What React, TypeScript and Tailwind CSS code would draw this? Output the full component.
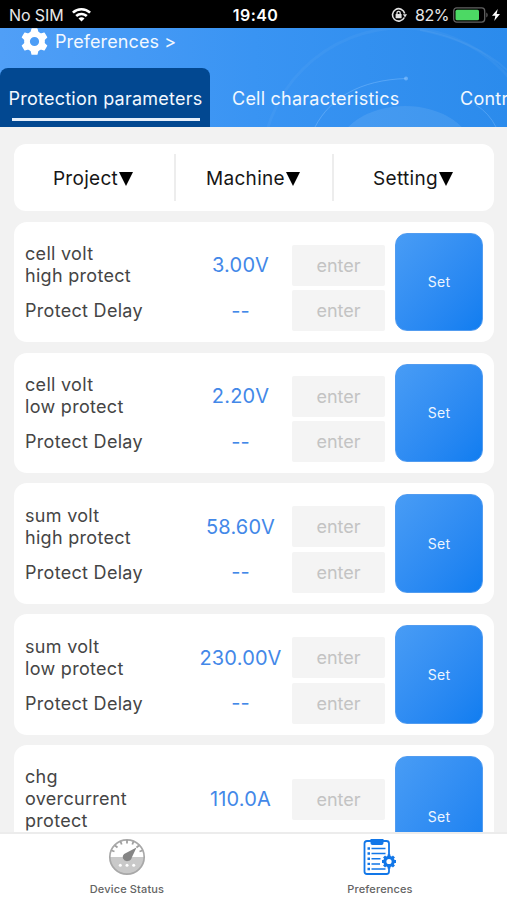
import type React from 'react'

type Param = {
  lines: string[]
  value: string
}

const params: Param[] = [
  { lines: ['cell volt', 'high protect'], value: '3.00V' },
  { lines: ['cell volt', 'low protect'], value: '2.20V' },
  { lines: ['sum volt', 'high protect'], value: '58.60V' },
  { lines: ['sum volt', 'low protect'], value: '230.00V' },
  { lines: ['chg', 'overcurrent', 'protect'], value: '110.0A' },
]

const GearIcon: React.FC<{ className?: string }> = ({ className }) => (
  <svg viewBox="0 0 27 27" className={className} fill="currentColor">
    {[0, 60, 120].map((angle) => (
      <g key={angle} transform={`rotate(${angle} 13.5 13.5)`}>
        <path d="M10.400 0.800Q10.500 0.300 11 0.300H16Q16.500 0.300 16.600 0.800L17.600 5H9.400Z" />
        <path d="M10.400 26.200Q10.500 26.700 11 26.700H16Q16.500 26.700 16.600 26.200L17.600 22H9.400Z" />
      </g>
    ))}
    <circle cx="13.500" cy="13.500" r="7.500" fill="none" stroke="currentColor" strokeWidth="5.800" />
  </svg>
)

const StatusBar: React.FC = () => (
  <div className="relative flex h-7 shrink-0 items-center bg-black pt-0.5 text-[16px] text-white">
    <span className="ml-[9px] w-[63px] whitespace-nowrap tracking-[-0.1px] text-[#e8e8e8]">No SIM</span>
    <svg viewBox="0 0 19 14" className="h-[14px] w-[19px]" fill="#fff">
      <path d="M9.5 0C13.100 0 16.500 1.400 19 3.700L17.200 5.600A11.300 11.300 0 0 0 1.800 5.600L0 3.700A14 14 0 0 1 9.500 0Z" />
      <path d="M9.500 4.700C11.800 4.700 14 5.600 15.700 7.100L13.900 9A6.500 6.500 0 0 0 5.100 9L3.300 7.100A9.200 9.200 0 0 1 9.500 4.700Z" />
      <path d="M9.500 9.200C10.700 9.200 11.700 9.600 12.500 10.400L9.500 13.500L6.500 10.400A4.400 4.400 0 0 1 9.500 9.200Z" />
    </svg>
    <span className="absolute inset-x-0 pl-[4px] text-center font-semibold tracking-[0.4px]">19:40</span>
    <div className="ml-auto flex items-center pr-[7px]">
      <svg viewBox="0 0 16 16" className="h-4 w-4" fill="none" stroke="#e2e2e2">
        <path d="M13.300 10.500A6.200 6.200 0 1 1 13.700 6.500" strokeWidth="1.600" />
        <path d="M11.900 7.200H16L14 10.400Z" fill="#e2e2e2" stroke="none" />
        <rect x="4.600" y="7" width="6" height="4.300" rx=".6" fill="#e2e2e2" stroke="none" />
        <path d="M6 7.300V5.900a1.600 1.600 0 0 1 3.200 0v1.400" strokeWidth="1.300" />
      </svg>
      <span className="ml-[8px] w-[38px] whitespace-nowrap tracking-[-0.4px] text-[#e8e8e8]">82%</span>
      <svg viewBox="0 0 36 16" className="h-4 w-9">
        <rect x=".7" y=".9" width="31" height="14.200" rx="3" fill="#000" stroke="#626262" strokeWidth="1.300" />
        <rect x="2.500" y="2.700" width="23.500" height="10.600" rx="1.500" fill="#4cd964" />
        <path d="M33.300 5.500c1.800.8 1.800 4.200 0 5Z" fill="#626262" />
      </svg>
      <svg viewBox="0 0 8 12" className="ml-[3px] h-3 w-2" fill="#fff">
        <path d="M5.800 0L0 6.800H3.400L2.200 12L8 5H4.600Z" />
      </svg>
    </div>
  </div>
)

const Header: React.FC = () => (
  <header className="relative flex h-[99px] shrink-0 flex-col justify-between overflow-hidden bg-gradient-to-r from-[#509ff7] via-[#3994f3] to-[#2b8bec] text-[#f2f8ff]">
    <svg viewBox="0 0 507 99" className="absolute inset-0 h-full w-full" fill="none">
      <circle cx="402" cy="140" r="140" stroke="#fff" strokeOpacity=".04" strokeWidth="3" />
      <path d="M315 99C330 70 360 52 406 50.500" stroke="#8cc5ff" strokeOpacity=".4" />
      <circle cx="406" cy="50.500" r="2" fill="#8cc5ff" fillOpacity=".6" />
      <path d="M476 77Q489 85 496 99" stroke="#8cc5ff" strokeOpacity=".35" />
      <ellipse cx="405" cy="123" rx="67" ry="45" fill="#fff" fillOpacity=".09" />
      <path d="M420 2Q475 13 507 42" stroke="#fff" strokeOpacity=".05" strokeWidth="2" />
    </svg>
    <div className="relative flex items-center pl-[21px]">
      <GearIcon className="h-[27px] w-[27px] text-white" />
      <span className="ml-[7px] text-[18px] tracking-[0.1px]">Preferences &gt;</span>
    </div>
    <nav className="relative flex h-[59px] text-[18px] tracking-[0.23px] whitespace-nowrap">
      <div className="flex w-[210px] shrink-0 flex-col items-center rounded-t-lg bg-[#024891] pt-[17px] pl-px">
        <span>Protection parameters</span>
        <div className="mt-[6px] h-[3px] w-[188px] bg-[#e4eefa]" />
      </div>
      <span className="ml-[22px] w-[228px] shrink-0 pt-[17px]">Cell characteristics</span>
      <span className="pt-[17px]">Control</span>
    </nav>
  </header>
)

const EnterField: React.FC = () => (
  <input
    placeholder="enter"
    className="h-[41px] w-[93px] rounded-[2px] bg-[#f4f4f4] text-center text-[18px] outline-none placeholder:text-[#c3c3c3]"
  />
)

const ParamCard: React.FC<{ param: Param }> = ({ param }) => (
  <section className="flex shrink-0 rounded-[13px] bg-white p-[11px]">
    <div className="flex flex-1 flex-col">
      <div className="flex items-center pt-[10.5px] pb-[3px]">
        <div className="w-[165px] text-[18px] leading-[22px] tracking-[0.3px] text-[#454545]">
          {param.lines.map((line) => (
            <div key={line}>{line}</div>
          ))}
        </div>
        <div className="w-[101px] text-center text-[20px] tracking-[0.2px] text-[#4388e8]">{param.value}</div>
        <div className="pl-px">
          <EnterField />
        </div>
      </div>
      <div className="flex items-center">
        <div className="w-[165px] text-[18px] tracking-[0.3px] text-[#454545]">Protect Delay</div>
        <div className="w-[101px] text-center text-[20px] text-[#4388e8]">--</div>
        <div className="pl-px">
          <EnterField />
        </div>
      </div>
    </div>
    <button className="w-[88px] rounded-[12px] border border-[#529cf0] bg-gradient-to-br from-[#489cf5] to-[#0f7df0] text-[14px] tracking-[0.3px] text-[#edf5ff]">
      Set
    </button>
  </section>
)

const Filters: React.FC = () => (
  <div className="flex h-[67px] shrink-0 items-center rounded-[12px] bg-white text-[19px] tracking-[0.3px] text-[#161616]">
    {['Project', 'Machine', 'Setting'].map((name, i) => (
      <div
        key={name}
        className={`flex h-[47px] items-center justify-center pt-[2px] pr-[2px] ${
          i === 0 ? 'w-[160px]' : i === 1 ? 'w-[160px] border-x-2 border-[#ededed]' : 'w-[160px]'
        }`}
      >
        <span>{name}</span>
        <svg viewBox="0 0 14 14" className="ml-[1px] h-[14px] w-[14px]">
          <path d="M0 0H14L7 14Z" fill="#000" />
        </svg>
      </div>
    ))}
  </div>
)

const GaugeIcon: React.FC = () => (
  <svg viewBox="0 0 38 38" className="h-[38px] w-[38px]" fill="none">
    <circle cx="19" cy="19" r="17" fill="#fff" />
    <path d="M2 19H36A17 17 0 0 1 2 19Z" fill="#c9c9c9" />
    <circle cx="19" cy="19" r="17.200" stroke="#a8a8a8" strokeWidth="1.700" />
    <path
      d="M3.500 12.500L6.500 13.500M7 7.500L9.500 9.500M12.500 3.500L13.700 6.500M19 2V5.500M25.500 3.500L24.300 6.500M31 7.500L28.500 9.500M34.500 12.500L31.500 13.500"
      stroke="#a0a0a0"
      strokeWidth="1.800"
    />
    <path d="M28.500 9.500L23.800 19.500A4.700 4.700 0 0 1 15 20.500C14.200 17.800 15.500 16.200 17.500 15.300Z" fill="#858585" />
    <circle cx="12.300" cy="27.300" r="1.500" fill="#fff" />
    <circle cx="19" cy="27.300" r="1.500" fill="#fff" />
    <circle cx="25.700" cy="27.300" r="1.500" fill="#fff" />
  </svg>
)

const ClipboardIcon: React.FC = () => (
  <svg viewBox="0 0 34 38" className="h-[38px] w-[34px]" fill="none" stroke="#1277e8">
    <path d="M26 17V5.500Q26 3 23.500 3H4Q1.500 3 1.500 5.500V33.500Q1.500 36 4 36H23.500Q26 36 26 33.500V30" strokeWidth="1.800" />
    <path d="M7.500 1H20.500V5Q20.500 7 18.500 7H9.500Q7.500 7 7.500 5Z" fill="#1277e8" stroke="none" />
    <path d="M4.500 10.500H7M4.500 15.500H7M4.500 20.700H7M4.500 25.900H7M4.500 31H7" strokeWidth="2.400" />
    <path d="M8.500 10.500H22.500M8.500 15.500H22.500M8.500 20.700H17.500M8.500 25.900H17M8.500 31H22.500" strokeWidth="1.500" />
    <circle cx="26" cy="23.500" r="5.700" fill="#1277e8" stroke="none" />
    <path
      d="M26 16.500V30.500M19 23.500H33M21.050 18.550L30.950 28.450M30.950 18.550L21.050 28.450"
      strokeWidth="2.900"
    />
    <circle cx="26" cy="23.500" r="2.600" fill="#fff" stroke="none" />
  </svg>
)

const TabBar: React.FC = () => (
  <footer className="relative flex h-[68px] shrink-0 border-t-2 border-[#ececec] bg-white text-[11px] font-medium tracking-[0.15px] text-[#646464]">
    <div className="flex w-[254px] flex-col items-center pt-[4px]">
      <GaugeIcon />
      <span className="mt-[5px]">Device Status</span>
    </div>
    <div className="flex w-[252px] flex-col items-center pt-[4px]">
      <ClipboardIcon />
      <span className="mt-[5px]">Preferences</span>
    </div>
  </footer>
)

const App: React.FC = () => (
  <div className="flex h-[900px] w-[507px] flex-col overflow-hidden bg-[#f2f2f2] font-['Inter',sans-serif]">
    <StatusBar />
    <Header />
    <main className="flex min-h-0 flex-1 flex-col gap-[10.3px] overflow-hidden pt-[17.45px] pr-[13px] pl-[14px]">
      <Filters />
      {params.map((param) => (
        <ParamCard key={param.lines.join(' ')} param={param} />
      ))}
    </main>
    <TabBar />
  </div>
)

export default App
